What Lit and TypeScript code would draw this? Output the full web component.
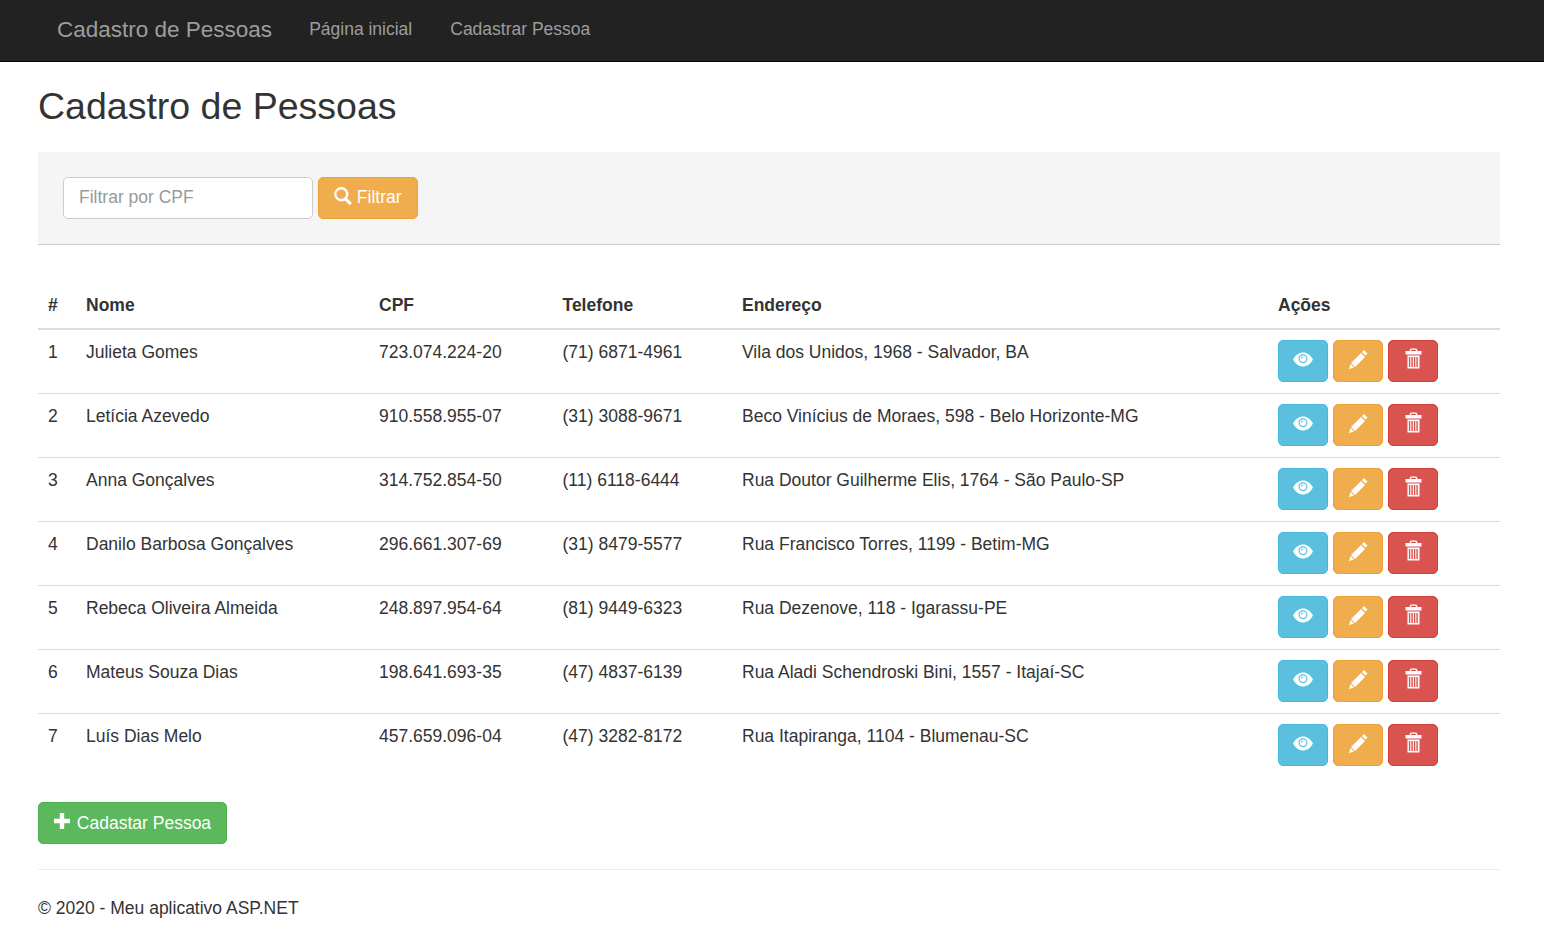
import { LitElement, html, css, svg } from "lit";
import { customElement } from "lit/decorators.js";

const pessoas = [
  ["1", "Julieta Gomes", "723.074.224-20", "(71) 6871-4961", "Vila dos Unidos, 1968 - Salvador, BA"],
  ["2", "Letícia Azevedo", "910.558.955-07", "(31) 3088-9671", "Beco Vinícius de Moraes, 598 - Belo Horizonte-MG"],
  ["3", "Anna Gonçalves", "314.752.854-50", "(11) 6118-6444", "Rua Doutor Guilherme Elis, 1764 - São Paulo-SP"],
  ["4", "Danilo Barbosa Gonçalves", "296.661.307-69", "(31) 8479-5577", "Rua Francisco Torres, 1199 - Betim-MG"],
  ["5", "Rebeca Oliveira Almeida", "248.897.954-64", "(81) 9449-6323", "Rua Dezenove, 118 - Igarassu-PE"],
  ["6", "Mateus Souza Dias", "198.641.693-35", "(47) 4837-6139", "Rua Aladi Schendroski Bini, 1557 - Itajaí-SC"],
  ["7", "Luís Dias Melo", "457.659.096-04", "(47) 3282-8172", "Rua Itapiranga, 1104 - Blumenau-SC"],
];

const icons = {
  search: svg`<path fill-rule="evenodd" d="M7.2 0a7.2 7.2 0 0 1 5.900 11.300l4.900 4.600-2.300 2.400-4.800-4.800A7.200 7.200 0 1 1 7.200 0zm0 2.400a4.800 4.800 0 1 0 0 9.600 4.800 4.800 0 0 0 0-9.600z"/>`,
  plus: svg`<path d="M5.800 0h4.400v5.800H16v4.400h-5.800V16H5.800v-5.800H0V5.800h5.800z"/>`,
  eye: svg`<path fill-rule="evenodd" d="M-1 9.500C2 4.500 5.300 2.500 9 2.500s7 2 10 7c-3 5-6.300 7-10 7s-7-2-10-7zM9 4.200a4.500 4.500 0 1 0 0 9 4.500 4.500 0 0 0 0-9zM9 5.400a3.300 3.300 0 1 1 0 6.600 3.300 3.300 0 0 1 0-6.600zM8.800 6.500a2 2 0 0 0-2 2h1.300a.8.8 0 0 1 .7-.8z"/>`,
  pencil: svg`<path d="M15 0l3.500 3.500-2 2L13 2zM12 3l4 4L6 17l-4-4zM1.500 14l3.500 3.500L0 19z"/>`,
  trash: svg`<path transform="translate(.5 .5)" fill-rule="evenodd" d="M6-2h6l1 2.500h4V4H1V.5h4zM6.800-.8 6.400.5h5.200L11.200-.8zM3 5h12v13H3zM4.400 6.500V16.500h1.400V6.500zM6.900 6.500V16.500h1.400V6.500zM9.400 6.500V16.500h1.400V6.500zM11.900 6.500V16.500h1.400V6.500z"/>`,
};

function icon(name: keyof typeof icons) {
  return html`<svg class="icon" viewBox="0 0 18 18" fill="currentColor">${icons[name]}</svg>`;
}

@customElement("app-root")
export class AppRoot extends LitElement {
  static styles = css`
    :host {
      display: block;
      font-family: "Liberation Sans", Arial, sans-serif;
      font-size: 17.5px;
      line-height: 25px;
      color: #333;
      background: #fff;
    }
    .navbar {
      display: flex;
      align-items: center;
      box-sizing: border-box;
      height: 62px;
      padding-left: 57px;
      padding-bottom: 3px;
      background: #222;
      border-bottom: 1px solid #080808;
      color: #9d9d9d;
    }
    .brand {
      font-size: 22.5px;
      margin-right: 37px;
    }
    .navlink {
      margin-right: 38px;
    }
    .content {
      padding: 0 44px 0 38px;
    }
    h2 {
      margin: 24px 0 26px;
      font-size: 37.5px;
      font-weight: 500;
      line-height: 40px;
    }
    .well {
      display: flex;
      gap: 5px;
      padding: 25px;
      background: #f5f5f5;
      border-bottom: 1px solid #ccc;
    }
    input {
      box-sizing: border-box;
      width: 250px;
      height: 42px;
      padding: 0 15px 2px;
      border: 1px solid #ccc;
      border-radius: 5px;
      background: #fff;
      font: inherit;
      color: #555;
      outline: none;
    }
    input::placeholder {
      color: #999;
      opacity: 1;
    }
    .btn {
      display: inline-block;
      box-sizing: border-box;
      height: 42px;
      padding: 7px 15px 8px;
      border: 1px solid transparent;
      border-radius: 5px;
      font: inherit;
      color: #fff;
      white-space: nowrap;
      vertical-align: middle;
    }
    .btn.square {
      width: 50px;
      padding: 7px 0 8px;
      text-align: center;
    }
    .info {
      background: #5bc0de;
      border-color: #46b8da;
    }
    .warning {
      background: #f0ad4e;
      border-color: #eea236;
    }
    .danger {
      background: #d9534f;
      border-color: #d43f3a;
    }
    .success {
      padding: 8px 15px 7px;
      background: #5cb85c;
      border-color: #4cae4c;
    }
    .icon {
      display: inline-block;
      width: 18px;
      height: 18px;
      overflow: visible;
      vertical-align: -2px;
    }
    table {
      width: 100%;
      table-layout: fixed;
      border-collapse: collapse;
      margin-top: 47px;
    }
    th {
      padding: 0 10px 10px;
      height: 26px;
      text-align: left;
      font-weight: 700;
      border-bottom: 2px solid #ddd;
    }
    td {
      padding: 10px 10px 11px;
      vertical-align: top;
      border-top: 1px solid #ddd;
    }
    tr:first-child td {
      border-top: 0;
    }
    .acoes {
      display: flex;
      gap: 5px;
    }
    .novo {
      margin-top: 25px;
    }
    hr {
      margin: 25px 0 0;
      border: 0;
      border-top: 1px solid #eee;
    }
    footer {
      margin-top: 26px;
    }
  `;

  render() {
    return html`
      <nav class="navbar">
        <span class="brand">Cadastro de Pessoas</span>
        <span class="navlink">Página inicial</span>
        <span class="navlink">Cadastrar Pessoa</span>
      </nav>
      <main class="content">
        <h2>Cadastro de Pessoas</h2>
        <div class="well">
          <input type="text" placeholder="Filtrar por CPF" />
          <button class="btn warning">${icon("search")} Filtrar</button>
        </div>
        <table>
          <colgroup>
            <col style="width:38px" />
            <col style="width:293px" />
            <col style="width:183.5px" />
            <col style="width:179.5px" />
            <col style="width:536px" />
            <col style="width:232px" />
          </colgroup>
          <thead>
            <tr>
              <th>#</th>
              <th>Nome</th>
              <th>CPF</th>
              <th>Telefone</th>
              <th>Endereço</th>
              <th>Ações</th>
            </tr>
          </thead>
          <tbody>
            ${pessoas.map(
              (p) => html`
                <tr>
                  ${p.map((v) => html`<td>${v}</td>`)}
                  <td>
                    <div class="acoes">
                      <button class="btn square info">${icon("eye")}</button>
                      <button class="btn square warning">${icon("pencil")}</button>
                      <button class="btn square danger">${icon("trash")}</button>
                    </div>
                  </td>
                </tr>
              `
            )}
          </tbody>
        </table>
        <div class="novo">
          <button class="btn success">${icon("plus")} Cadastar Pessoa</button>
        </div>
        <hr />
        <footer>© 2020 - Meu aplicativo ASP.NET</footer>
      </main>
    `;
  }
}
